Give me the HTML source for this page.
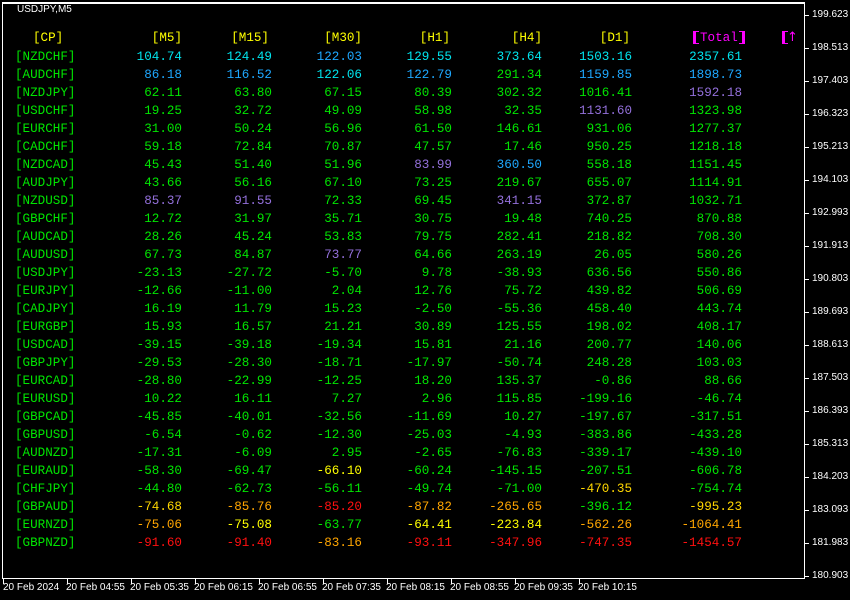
<!DOCTYPE html>
<html><head><meta charset="utf-8"><style>
html,body{margin:0;padding:0;background:#000;}
body{width:850px;height:600px;position:relative;overflow:hidden;font-family:"Liberation Mono",monospace;}
.frame{position:absolute;left:2px;top:2px;width:803px;height:577px;border:1px solid #fff;border-top-width:2px;box-sizing:border-box;}
.r{position:absolute;left:0;width:850px;height:16px;font-size:12.6px;line-height:16px;}
.r span{position:absolute;top:0;text-align:right;white-space:pre;}
.p{left:15px;text-align:left!important;color:#00e600}
.a{left:100px;width:82px}.b{left:190px;width:82px}.c{left:280px;width:82px}.d{left:370px;width:82px}.e{left:460px;width:82px}.f{left:550px;width:82px}.g{left:640px;width:102px}
.C{color:#00e5ee}.B{color:#1ea8ff}.G{color:#00e600}.P{color:#9370db}.Y{color:#ffff00}.Go{color:#ffd700}.O{color:#ffa500}.R{color:#ff1010}.M{color:#ff00ff}
.ax{position:absolute;font-family:"Liberation Sans",sans-serif;font-size:10px;color:#fff;line-height:12px;white-space:nowrap}
.tk{position:absolute;background:#fff}
.bl,.br{position:absolute;top:31px;width:3px;height:11px;border:0 solid #ff00ff;border-width:1px 0;}
.bl{border-left:3px solid #ff00ff;}
.br{border-right:3px solid #ff00ff;}
</style></head><body>
<div class="frame"></div>
<div class="ax" style="left:17px;top:4px;font-size:10px">USDJPY,M5</div>

<div class="r" style="top:30px">
<span style="left:33px" class="Y">[CP]</span>
<span class="a Y">[M5]</span><span class="b Y" style="width:79px">[M15]</span><span class="c Y">[M30]</span><span class="d Y" style="width:80px">[H1]</span><span class="e Y">[H4]</span><span class="f Y" style="width:80px">[D1]</span><span class="M" style="left:700px">Total</span><span class="M" style="left:787px;font-family:'DejaVu Sans',sans-serif;font-size:13px">↑</span>
</div>
<div class="bl" style="left:693px"></div>
<div class="br" style="left:739px"></div>
<div class="bl" style="left:782px"></div>

<div class="r" style="top:49px"><span class="p">[NZDCHF]</span><span class="a C">104.74</span><span class="b C">124.49</span><span class="c B">122.03</span><span class="d C">129.55</span><span class="e C">373.64</span><span class="f C">1503.16</span><span class="g C">2357.61</span></div>
<div class="r" style="top:67px"><span class="p">[AUDCHF]</span><span class="a B">86.18</span><span class="b B">116.52</span><span class="c C">122.06</span><span class="d B">122.79</span><span class="e G">291.34</span><span class="f B">1159.85</span><span class="g B">1898.73</span></div>
<div class="r" style="top:85px"><span class="p">[NZDJPY]</span><span class="a G">62.11</span><span class="b G">63.80</span><span class="c G">67.15</span><span class="d G">80.39</span><span class="e G">302.32</span><span class="f G">1016.41</span><span class="g P">1592.18</span></div>
<div class="r" style="top:103px"><span class="p">[USDCHF]</span><span class="a G">19.25</span><span class="b G">32.72</span><span class="c G">49.09</span><span class="d G">58.98</span><span class="e G">32.35</span><span class="f P">1131.60</span><span class="g G">1323.98</span></div>
<div class="r" style="top:121px"><span class="p">[EURCHF]</span><span class="a G">31.00</span><span class="b G">50.24</span><span class="c G">56.96</span><span class="d G">61.50</span><span class="e G">146.61</span><span class="f G">931.06</span><span class="g G">1277.37</span></div>
<div class="r" style="top:139px"><span class="p">[CADCHF]</span><span class="a G">59.18</span><span class="b G">72.84</span><span class="c G">70.87</span><span class="d G">47.57</span><span class="e G">17.46</span><span class="f G">950.25</span><span class="g G">1218.18</span></div>
<div class="r" style="top:157px"><span class="p">[NZDCAD]</span><span class="a G">45.43</span><span class="b G">51.40</span><span class="c G">51.96</span><span class="d P">83.99</span><span class="e B">360.50</span><span class="f G">558.18</span><span class="g G">1151.45</span></div>
<div class="r" style="top:175px"><span class="p">[AUDJPY]</span><span class="a G">43.66</span><span class="b G">56.16</span><span class="c G">67.10</span><span class="d G">73.25</span><span class="e G">219.67</span><span class="f G">655.07</span><span class="g G">1114.91</span></div>
<div class="r" style="top:193px"><span class="p">[NZDUSD]</span><span class="a P">85.37</span><span class="b P">91.55</span><span class="c G">72.33</span><span class="d G">69.45</span><span class="e P">341.15</span><span class="f G">372.87</span><span class="g G">1032.71</span></div>
<div class="r" style="top:211px"><span class="p">[GBPCHF]</span><span class="a G">12.72</span><span class="b G">31.97</span><span class="c G">35.71</span><span class="d G">30.75</span><span class="e G">19.48</span><span class="f G">740.25</span><span class="g G">870.88</span></div>
<div class="r" style="top:229px"><span class="p">[AUDCAD]</span><span class="a G">28.26</span><span class="b G">45.24</span><span class="c G">53.83</span><span class="d G">79.75</span><span class="e G">282.41</span><span class="f G">218.82</span><span class="g G">708.30</span></div>
<div class="r" style="top:247px"><span class="p">[AUDUSD]</span><span class="a G">67.73</span><span class="b G">84.87</span><span class="c P">73.77</span><span class="d G">64.66</span><span class="e G">263.19</span><span class="f G">26.05</span><span class="g G">580.26</span></div>
<div class="r" style="top:265px"><span class="p">[USDJPY]</span><span class="a G">-23.13</span><span class="b G">-27.72</span><span class="c G">-5.70</span><span class="d G">9.78</span><span class="e G">-38.93</span><span class="f G">636.56</span><span class="g G">550.86</span></div>
<div class="r" style="top:283px"><span class="p">[EURJPY]</span><span class="a G">-12.66</span><span class="b G">-11.00</span><span class="c G">2.04</span><span class="d G">12.76</span><span class="e G">75.72</span><span class="f G">439.82</span><span class="g G">506.69</span></div>
<div class="r" style="top:301px"><span class="p">[CADJPY]</span><span class="a G">16.19</span><span class="b G">11.79</span><span class="c G">15.23</span><span class="d G">-2.50</span><span class="e G">-55.36</span><span class="f G">458.40</span><span class="g G">443.74</span></div>
<div class="r" style="top:319px"><span class="p">[EURGBP]</span><span class="a G">15.93</span><span class="b G">16.57</span><span class="c G">21.21</span><span class="d G">30.89</span><span class="e G">125.55</span><span class="f G">198.02</span><span class="g G">408.17</span></div>
<div class="r" style="top:337px"><span class="p">[USDCAD]</span><span class="a G">-39.15</span><span class="b G">-39.18</span><span class="c G">-19.34</span><span class="d G">15.81</span><span class="e G">21.16</span><span class="f G">200.77</span><span class="g G">140.06</span></div>
<div class="r" style="top:355px"><span class="p">[GBPJPY]</span><span class="a G">-29.53</span><span class="b G">-28.30</span><span class="c G">-18.71</span><span class="d G">-17.97</span><span class="e G">-50.74</span><span class="f G">248.28</span><span class="g G">103.03</span></div>
<div class="r" style="top:373px"><span class="p">[EURCAD]</span><span class="a G">-28.80</span><span class="b G">-22.99</span><span class="c G">-12.25</span><span class="d G">18.20</span><span class="e G">135.37</span><span class="f G">-0.86</span><span class="g G">88.66</span></div>
<div class="r" style="top:391px"><span class="p">[EURUSD]</span><span class="a G">10.22</span><span class="b G">16.11</span><span class="c G">7.27</span><span class="d G">2.96</span><span class="e G">115.85</span><span class="f G">-199.16</span><span class="g G">-46.74</span></div>
<div class="r" style="top:409px"><span class="p">[GBPCAD]</span><span class="a G">-45.85</span><span class="b G">-40.01</span><span class="c G">-32.56</span><span class="d G">-11.69</span><span class="e G">10.27</span><span class="f G">-197.67</span><span class="g G">-317.51</span></div>
<div class="r" style="top:427px"><span class="p">[GBPUSD]</span><span class="a G">-6.54</span><span class="b G">-0.62</span><span class="c G">-12.30</span><span class="d G">-25.03</span><span class="e G">-4.93</span><span class="f G">-383.86</span><span class="g G">-433.28</span></div>
<div class="r" style="top:445px"><span class="p">[AUDNZD]</span><span class="a G">-17.31</span><span class="b G">-6.09</span><span class="c G">2.95</span><span class="d G">-2.65</span><span class="e G">-76.83</span><span class="f G">-339.17</span><span class="g G">-439.10</span></div>
<div class="r" style="top:463px"><span class="p">[EURAUD]</span><span class="a G">-58.30</span><span class="b G">-69.47</span><span class="c Y">-66.10</span><span class="d G">-60.24</span><span class="e G">-145.15</span><span class="f G">-207.51</span><span class="g G">-606.78</span></div>
<div class="r" style="top:481px"><span class="p">[CHFJPY]</span><span class="a G">-44.80</span><span class="b G">-62.73</span><span class="c G">-56.11</span><span class="d G">-49.74</span><span class="e G">-71.00</span><span class="f Go">-470.35</span><span class="g G">-754.74</span></div>
<div class="r" style="top:499px"><span class="p">[GBPAUD]</span><span class="a Go">-74.68</span><span class="b O">-85.76</span><span class="c R">-85.20</span><span class="d O">-87.82</span><span class="e O">-265.65</span><span class="f G">-396.12</span><span class="g Go">-995.23</span></div>
<div class="r" style="top:517px"><span class="p">[EURNZD]</span><span class="a O">-75.06</span><span class="b Y">-75.08</span><span class="c G">-63.77</span><span class="d Y">-64.41</span><span class="e Y">-223.84</span><span class="f O">-562.26</span><span class="g O">-1064.41</span></div>
<div class="r" style="top:535px"><span class="p">[GBPNZD]</span><span class="a R">-91.60</span><span class="b R">-91.40</span><span class="c O">-83.16</span><span class="d R">-93.11</span><span class="e R">-347.96</span><span class="f R">-747.35</span><span class="g R">-1454.57</span></div>

<!-- price axis -->
<div class="tk" style="left:805px;top:15px;width:4px;height:1px"></div><div class="ax" style="left:812px;top:9px">199.623</div>
<div class="tk" style="left:805px;top:48px;width:4px;height:1px"></div><div class="ax" style="left:812px;top:42px">198.513</div>
<div class="tk" style="left:805px;top:81px;width:4px;height:1px"></div><div class="ax" style="left:812px;top:75px">197.403</div>
<div class="tk" style="left:805px;top:114px;width:4px;height:1px"></div><div class="ax" style="left:812px;top:108px">196.323</div>
<div class="tk" style="left:805px;top:147px;width:4px;height:1px"></div><div class="ax" style="left:812px;top:141px">195.213</div>
<div class="tk" style="left:805px;top:180px;width:4px;height:1px"></div><div class="ax" style="left:812px;top:174px">194.103</div>
<div class="tk" style="left:805px;top:213px;width:4px;height:1px"></div><div class="ax" style="left:812px;top:207px">192.993</div>
<div class="tk" style="left:805px;top:246px;width:4px;height:1px"></div><div class="ax" style="left:812px;top:240px">191.913</div>
<div class="tk" style="left:805px;top:279px;width:4px;height:1px"></div><div class="ax" style="left:812px;top:273px">190.803</div>
<div class="tk" style="left:805px;top:312px;width:4px;height:1px"></div><div class="ax" style="left:812px;top:306px">189.693</div>
<div class="tk" style="left:805px;top:345px;width:4px;height:1px"></div><div class="ax" style="left:812px;top:339px">188.613</div>
<div class="tk" style="left:805px;top:378px;width:4px;height:1px"></div><div class="ax" style="left:812px;top:372px">187.503</div>
<div class="tk" style="left:805px;top:411px;width:4px;height:1px"></div><div class="ax" style="left:812px;top:405px">186.393</div>
<div class="tk" style="left:805px;top:444px;width:4px;height:1px"></div><div class="ax" style="left:812px;top:438px">185.313</div>
<div class="tk" style="left:805px;top:477px;width:4px;height:1px"></div><div class="ax" style="left:812px;top:471px">184.203</div>
<div class="tk" style="left:805px;top:510px;width:4px;height:1px"></div><div class="ax" style="left:812px;top:504px">183.093</div>
<div class="tk" style="left:805px;top:543px;width:4px;height:1px"></div><div class="ax" style="left:812px;top:537px">181.983</div>
<div class="tk" style="left:805px;top:576px;width:4px;height:1px"></div><div class="ax" style="left:812px;top:570px">180.903</div>

<!-- time axis -->
<div class="tk" style="left:3px;top:579px;width:1px;height:5px"></div><div class="ax" style="left:3px;top:582px">20 Feb 2024</div>
<div class="tk" style="left:67px;top:579px;width:1px;height:5px"></div><div class="ax" style="left:66px;top:582px">20 Feb 04:55</div>
<div class="tk" style="left:131px;top:579px;width:1px;height:5px"></div><div class="ax" style="left:130px;top:582px">20 Feb 05:35</div>
<div class="tk" style="left:195px;top:579px;width:1px;height:5px"></div><div class="ax" style="left:194px;top:582px">20 Feb 06:15</div>
<div class="tk" style="left:259px;top:579px;width:1px;height:5px"></div><div class="ax" style="left:258px;top:582px">20 Feb 06:55</div>
<div class="tk" style="left:323px;top:579px;width:1px;height:5px"></div><div class="ax" style="left:322px;top:582px">20 Feb 07:35</div>
<div class="tk" style="left:387px;top:579px;width:1px;height:5px"></div><div class="ax" style="left:386px;top:582px">20 Feb 08:15</div>
<div class="tk" style="left:451px;top:579px;width:1px;height:5px"></div><div class="ax" style="left:450px;top:582px">20 Feb 08:55</div>
<div class="tk" style="left:515px;top:579px;width:1px;height:5px"></div><div class="ax" style="left:514px;top:582px">20 Feb 09:35</div>
<div class="tk" style="left:579px;top:579px;width:1px;height:5px"></div><div class="ax" style="left:578px;top:582px">20 Feb 10:15</div>
</body></html>
